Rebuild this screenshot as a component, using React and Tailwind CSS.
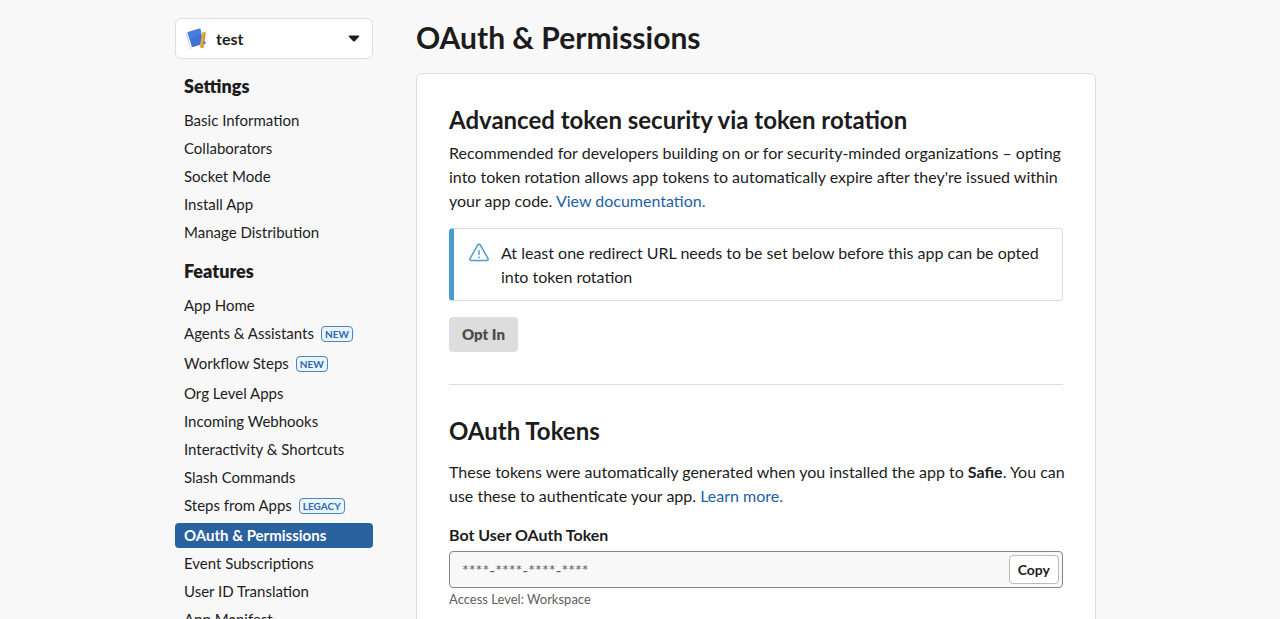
import { useState } from "react";

const settingsLinks = [
  { label: "Basic Information" },
  { label: "Collaborators" },
  { label: "Socket Mode" },
  { label: "Install App" },
  { label: "Manage Distribution" },
];

const featureLinks = [
  { label: "App Home" },
  { label: "Agents & Assistants", badge: "NEW" },
  { label: "Workflow Steps", badge: "NEW" },
  { label: "Org Level Apps" },
  { label: "Incoming Webhooks" },
  { label: "Interactivity & Shortcuts" },
  { label: "Slash Commands" },
  { label: "Steps from Apps", badge: "LEGACY" },
  { label: "OAuth & Permissions" },
  { label: "Event Subscriptions" },
  { label: "User ID Translation" },
  { label: "App Manifest" },
];

const AppIcon = () => (
  <svg width="22" height="22" viewBox="0 0 22 22" aria-hidden="true">
    <path d="M.4 5.400 2.600 4.600l4.400 15.400-1.600 1z" fill="#c9cacc" />
    <path d="M1.400 5.200 3.200 4.400l4 15-1.400 1z" fill="#f4f4f4" />
    <path d="M2.600 4.200 15.200.6l3.200 15.400L7 19.200z" fill="#3b74d6" />
    <path d="M2.600 4.200 15.200.6l1.200 6L4.800 12z" fill="#447ddd" />
    <path d="m18.800 12.600 2.200 1.800-2 2.400z" fill="#3568c0" />
    <path d="m17.200 4 3.400.4L18.200 20.200l-3.500-.7z" fill="#e3a945" />
    <path d="m19.600 4.300 1 .1-2.400 15.800-1-.2z" fill="#c68a2c" />
  </svg>
);

const WarningIcon = () => (
  <svg
    width="20"
    height="20"
    viewBox="0 0 20 20"
    fill="none"
    stroke="#4a9ccd"
    strokeWidth="1.500"
    strokeLinecap="round"
    strokeLinejoin="round"
    aria-hidden="true"
  >
    <path d="M8.600 2.100a1.600 1.600 0 0 1 2.800 0l7.600 13.500a1.300 1.300 0 0 1-1.200 2H2.200a1.300 1.300 0 0 1-1.200-2z" />
    <path d="M10 7.800v3.700" />
    <path d="M10 14.300v.1" strokeWidth="1.800" />
  </svg>
);

const NavSection = ({ title, links, active, onSelect }) => (
  <div className="mb-[9px]">
    <h2 className="px-[9px] text-lg font-extrabold leading-7">{title}</h2>
    <ul className="mt-2">
      {links.map(({ label, badge }) => (
        <li key={label} className={badge ? "pb-[5px]" : "pb-[3px]"}>
          <a
            href="#"
            onClick={(e) => {
              e.preventDefault();
              onSelect(label);
            }}
            className={`flex items-center gap-[7px] rounded px-[9px] text-[15px] leading-[25px] ${
              active === label ? "bg-[#2a619f] font-bold text-white" : ""
            }`}
          >
            {label}
            {badge && (
              <span className="rounded border border-[#4a86c5] bg-[#e8f5fa] px-[3px] text-[10px] font-bold leading-[14px] text-[#2f66ad]">
                {badge}
              </span>
            )}
          </a>
        </li>
      ))}
    </ul>
  </div>
);

const App = () => {
  const [active, setActive] = useState("OAuth & Permissions");

  return (
    <div className="min-h-screen bg-[#f8f8f8] font-['Lato',sans-serif] text-[#1d1c1d]">
      <div className="mx-auto flex max-w-[930px] gap-[43px] pr-[9px] pt-[18px]">
        {/* Sidebar */}
        <nav className="w-[198px] shrink-0">
          <button
            type="button"
            className="mb-[13px] flex h-[41px] w-full items-center rounded-md border border-[#dddddd] bg-white pl-[9px] pr-3 text-base font-bold"
          >
            <AppIcon />
            <span className="ml-[9px]">test</span>
            <svg width="12" height="7" viewBox="0 0 12 7" className="ml-auto" aria-hidden="true">
              <path d="M1.500.5h9a.8.8 0 0 1 .6 1.300L6.800 6.200a1.100 1.100 0 0 1-1.600 0L.9 1.800A.8.8 0 0 1 1.500.5z" fill="#1d1c1d" />
            </svg>
          </button>
          <NavSection title="Settings" links={settingsLinks} active={active} onSelect={setActive} />
          <NavSection title="Features" links={featureLinks} active={active} onSelect={setActive} />
        </nav>

        {/* Content */}
        <main className="min-w-0 flex-1">
          <h1 className="mb-[17px] text-3xl font-bold leading-[38px]">OAuth &amp; Permissions</h1>

          <div className="rounded-md border border-[#dddddd] bg-white p-8">
            <section className="border-b border-[#dddddd] pb-8">
              <h2 className="text-2xl font-bold leading-7">Advanced token security via token rotation</h2>
              <p className="-mr-2 mt-[7px] text-base leading-6">
                Recommended for developers building on or for security-minded organizations – opting into token
                rotation allows app tokens to automatically expire after they're issued within your app code.{" "}
                <a href="#" className="text-[#1d5fa8]">View documentation.</a>
              </p>

              <div className="mt-[15px] flex rounded border border-l-5 border-[#dddddd] border-l-[#4a9ccd] pb-[11px] pl-[15px] pr-4 pt-3">
                <div className="mt-0.5 shrink-0">
                  <WarningIcon />
                </div>
                <p className="ml-3 text-base leading-6">
                  At least one redirect URL needs to be set below before this app can be opted into token rotation
                </p>
              </div>

              <button
                type="button"
                disabled
                className="mt-4 h-[35px] rounded bg-[#dddddd] px-[13px] text-[15px] font-extrabold text-[#4f4e4f]"
              >
                Opt In
              </button>
            </section>

            <section className="pt-8">
              <h2 className="text-2xl font-bold leading-7">OAuth Tokens</h2>
              <p className="-mr-2 mt-[15px] text-base leading-6">
                These tokens were automatically generated when you installed the app to <b>Safie</b>. You can use
                these to authenticate your app.{" "}
                <a href="#" className="text-[#1d5fa8]">Learn more.</a>
              </p>

              <label htmlFor="bot-token" className="mt-[15px] block text-base font-bold leading-6">
                Bot User OAuth Token
              </label>
              <div className="mt-1 flex h-[37px] items-center rounded border border-[#868686] bg-[#f8f8f8] pr-[3px]">
                <input
                  id="bot-token"
                  type="text"
                  readOnly
                  value="****-****-****-****"
                  className="min-w-0 flex-1 bg-transparent px-3 text-base text-[#616061] outline-none"
                />
                <button
                  type="button"
                  className="h-[29px] rounded border border-[#bbbbbb] bg-white px-2 text-sm font-bold"
                >
                  Copy
                </button>
              </div>
              <p className="mt-px text-[13px] leading-5 text-[#616061]">Access Level: Workspace</p>
            </section>
          </div>
        </main>
      </div>
    </div>
  );
};

export default App;
